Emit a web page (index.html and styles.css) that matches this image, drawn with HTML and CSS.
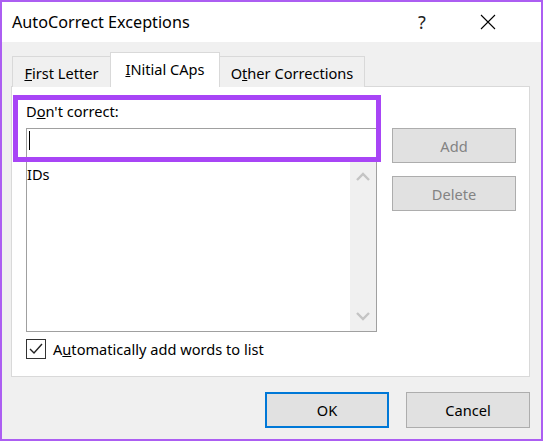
FILE: index.html
```html
<!DOCTYPE html>
<html>
<head>
<meta charset="utf-8">
<link rel="stylesheet" href="styles.css">
</head>
<body>
<div class="window">
  <div class="titlebar">
    <span class="title">AutoCorrect Exceptions</span>
    <span class="help">?</span>
    <span class="close">
      <svg width="16" height="16" viewBox="0 0 16 16"><path d="M1 1 L15 15 M15 1 L1 15" stroke="#000" stroke-width="1.1" fill="none"/></svg>
    </span>
  </div>
  <div class="body">
    <div class="tabs">
      <div class="tab tab-first"><u>F</u>irst Letter</div>
      <div class="tab tab-active"><u>I</u>Nitial CAps</div>
      <div class="tab tab-other">O<u>t</u>her Corrections</div>
    </div>
    <div class="panel">
      <div class="left">
        <div class="label">D<u>o</u>n't correct:</div>
        <div class="input"><span class="caret"></span></div>
        <div class="list">
          <div class="items"><div class="item">IDs</div></div>
          <div class="scrollbar">
            <svg class="chev" width="14" height="9" viewBox="0 0 14 9"><path d="M1 8 L7 2 L13 8" stroke="#c4c4c4" stroke-width="2.4" fill="none"/></svg>
            <svg class="chev" width="14" height="9" viewBox="0 0 14 9"><path d="M1 1 L7 7 L13 1" stroke="#c4c4c4" stroke-width="2.4" fill="none"/></svg>
          </div>
        </div>
        <div class="check-row">
          <span class="checkbox">
            <svg width="18" height="18" viewBox="0 0 18 18"><path d="M3 9 L7 13 L15 4" stroke="#222" stroke-width="1.4" fill="none"/></svg>
          </span>
          <span class="check-label">A<u>u</u>tomatically add words to list</span>
        </div>
      </div>
      <div class="right">
        <div class="btn btn-disabled">Add</div>
        <div class="btn btn-disabled">Delete</div>
      </div>
      <div class="highlight"></div>
    </div>
    <div class="footer">
      <div class="btn btn-default">OK</div>
      <div class="btn">Cancel</div>
    </div>
  </div>
</div>
</body>
</html>
```
FILE: styles.css
```css
html, body {
  margin: 0;
  padding: 0;
  background: #ffffff;
}
body {
  font-family: "Noto Sans", "Open Sans", sans-serif;
  font-size: 14.6px;
  color: #000;
}
.window {
  width: 543px;
  height: 441px;
  box-sizing: border-box;
  border: 2px solid #ac5ef2;
  display: flex;
  flex-direction: column;
}
.titlebar {
  height: 40px;
  background: #fff;
  display: flex;
  align-items: center;
  padding-left: 10px;
}
.title {
  font-size: 16.2px;
  flex: 1;
  margin-top: -1px;
}
.help {
  font-size: 18px;
  width: 20px;
  margin-right: 42px;
  color: #222;
}
.close {
  width: 16px;
  height: 16px;
  margin-right: 45px;
  display: flex;
}
.body {
  flex: 1;
  background: #f0f0f0;
  padding: 11px 0 0 9px;
  display: flex;
  flex-direction: column;
}
.tabs {
  display: flex;
  align-items: flex-end;
  height: 34px;
  padding-left: 1px;
  position: relative;
  z-index: 2;
  margin-bottom: -1px;
}
.tab {
  box-sizing: border-box;
  height: 31px;
  border: 1px solid #d9d9d9;
  border-bottom: none;
  background: #f0f0f0;
  display: flex;
  align-items: center;
  justify-content: center;
  padding-top: 2px;
}
.tab-first {
  width: 98px;
  border-right: none;
}
.tab-active {
  width: 110px;
  height: 35px;
  background: #fff;
  padding-top: 0;
  padding-bottom: 2px;
}
.tab-other {
  width: 145px;
  border-left: none;
}
.panel {
  position: relative;
  box-sizing: border-box;
  width: 519px;
  height: 291px;
  background: #fff;
  border: 1px solid #d9d9d9;
  display: flex;
  padding: 0 0 0 14px;
}
.left {
  width: 351px;
  display: flex;
  flex-direction: column;
}
.label {
  height: 41px;
  line-height: 20px;
  padding-top: 14px;
  box-sizing: border-box;
}
.input {
  box-sizing: border-box;
  height: 33px;
  border: 1px solid #a0a0a0;
  background: #fff;
  position: relative;
}
.caret {
  display: block;
  width: 1px;
  height: 19px;
  background: #000;
  margin: 2px 0 0 2px;
}
.list {
  box-sizing: border-box;
  height: 172px;
  margin-top: -1px;
  border: 1px solid #a0a0a0;
  display: flex;
}
.items {
  flex: 1;
  padding: 3px 0 0 0;
  line-height: 20px;
}
.scrollbar {
  width: 26px;
  background: #f0f0f0;
  display: flex;
  flex-direction: column;
  justify-content: space-between;
  align-items: center;
  padding: 11px 0 10px 0;
}
.check-row {
  display: flex;
  align-items: center;
  margin-top: 7px;
  height: 20px;
}
.checkbox {
  box-sizing: border-box;
  width: 20px;
  height: 20px;
  border: 1px solid #333;
  display: flex;
  align-items: center;
  justify-content: center;
  margin-right: 7px;
}
.right {
  margin-left: 15px;
  padding-top: 41px;
  display: flex;
  flex-direction: column;
  gap: 13px;
}
.btn {
  box-sizing: border-box;
  width: 124px;
  height: 35px;
  background: #e1e1e1;
  border: 1px solid #adadad;
  display: flex;
  align-items: center;
  justify-content: center;
}
.btn-disabled {
  color: #838383;
}
.btn-default {
  border: 2px solid #0078d7;
}
.footer {
  display: flex;
  justify-content: flex-end;
  gap: 17px;
  padding: 15px 11px 0 0;
}
.footer .btn {
  height: 36px;
}
.highlight {
  position: absolute;
  left: 1px;
  top: 8px;
  width: 368px;
  height: 67px;
  box-sizing: border-box;
  border: 5px solid #a845f6;
  pointer-events: none;
}
```
